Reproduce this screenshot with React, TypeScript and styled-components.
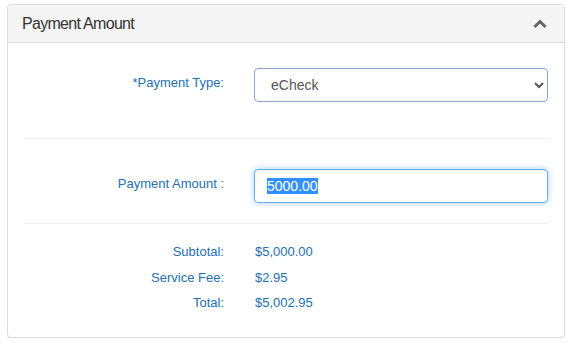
import React, { useEffect, useRef } from "react";
import styled, { createGlobalStyle } from "styled-components";

const GlobalStyle = createGlobalStyle`
  body {
    margin: 0;
    background: #ffffff;
    font-family: "Liberation Sans", Arial, sans-serif;
  }
`;

const Page = styled.div`
  padding: 4px 11px 0 7px;
`;

const Panel = styled.section`
  border: 1px solid #dddddd;
  border-radius: 4px;
  background: #ffffff;
  box-shadow: 0 1px 1px rgba(0, 0, 0, 0.05);
`;

const Header = styled.header`
  display: flex;
  align-items: center;
  justify-content: space-between;
  height: 37px;
  padding: 0 17px 0 14px;
  background: #f5f5f5;
  border-bottom: 1px solid #dddddd;
  border-radius: 3px 3px 0 0;
`;

const Title = styled.h3`
  margin: 0;
  font-size: 16px;
  font-weight: 400;
  letter-spacing: -0.7px;
  color: #333333;
`;

const Body = styled.div`
  padding: 25px 16px 21px;
`;

const FieldRow = styled.div<{ $top?: number }>`
  display: grid;
  grid-template-columns: 200px 1fr;
  column-gap: 30px;
  align-items: start;
  margin-top: ${(p) => p.$top ?? 0}px;
`;

const Label = styled.label`
  padding-top: 7px;
  text-align: right;
  font-size: 13px;
  line-height: 16px;
  color: #2470b3;
`;

const Select = styled.select`
  height: 34px;
  padding: 0 10px 0 12px;
  border: 1px solid #8ea7c6;
  border-radius: 4px;
  background: #ffffff;
  font-family: "Liberation Sans", Arial, sans-serif;
  font-size: 14px;
  color: #555555;
  outline: none;
`;

const Input = styled.input`
  box-sizing: border-box;
  height: 34px;
  padding: 0 12px;
  border: 1px solid #66afe9;
  border-radius: 4px;
  font-family: "Liberation Sans", Arial, sans-serif;
  font-size: 14px;
  color: #555555;
  outline: none;
  box-shadow: inset 0 1px 1px rgba(0, 0, 0, 0.075), 0 0 6px rgba(102, 175, 233, 0.6);
  &::selection {
    background: #3390ff;
    color: #ffffff;
  }
`;

const Divider = styled.hr<{ $top: number }>`
  margin: ${(p) => p.$top}px 0 0;
  border: 0;
  border-top: 1px solid #eeeeee;
`;

const Summary = styled.div`
  padding-top: 15px;
`;

const SummaryRow = styled.div`
  display: grid;
  grid-template-columns: 200px 1fr;
  column-gap: 31px;
  font-size: 13px;
  line-height: 25.5px;
  color: #2470b3;
`;

const SummaryLabel = styled.span`
  text-align: right;
`;

const Chevron = () => (
  <svg width="14" height="10" viewBox="0 0 14 10">
    <path d="M1.5 8 L7 2.5 L12.5 8" fill="none" stroke="#666666" strokeWidth="3" />
  </svg>
);

const totals = [
  ["Subtotal:", "$5,000.00"],
  ["Service Fee:", "$2.95"],
  ["Total:", "$5,002.95"],
];

export default function App() {
  const amountRef = useRef<HTMLInputElement>(null);

  useEffect(() => {
    amountRef.current?.focus();
    amountRef.current?.select();
  }, []);

  return (
    <Page>
      <GlobalStyle />
      <Panel>
        <Header>
          <Title>Payment Amount</Title>
          <Chevron />
        </Header>
        <Body>
          <FieldRow>
            <Label>*Payment Type:</Label>
            <Select defaultValue="eCheck">
              <option>eCheck</option>
              <option>Credit Card</option>
            </Select>
          </FieldRow>
          <Divider $top={36} />
          <FieldRow $top={30}>
            <Label>Payment Amount :</Label>
            <Input ref={amountRef} defaultValue="5000.00" />
          </FieldRow>
          <Divider $top={20} />
          <Summary>
            {totals.map(([label, value]) => (
              <SummaryRow key={label}>
                <SummaryLabel>{label}</SummaryLabel>
                <span>{value}</span>
              </SummaryRow>
            ))}
          </Summary>
        </Body>
      </Panel>
    </Page>
  );
}
